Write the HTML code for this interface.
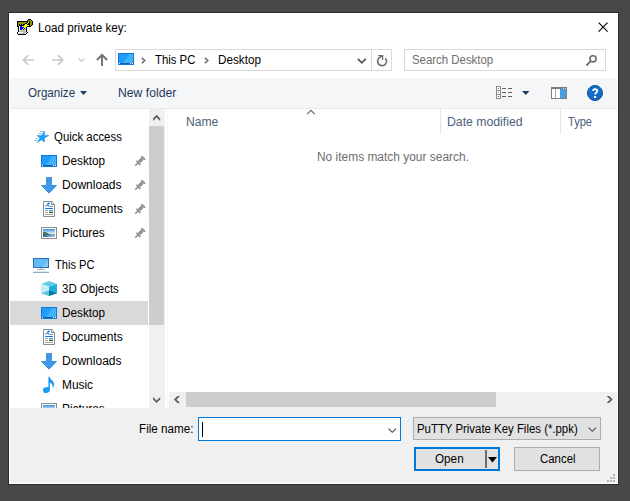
<!DOCTYPE html>
<html><head><meta charset="utf-8">
<style>
html,body{margin:0;padding:0;width:630px;height:501px;overflow:hidden;background:#484848;}
*{box-sizing:border-box;}
.a{position:absolute;}
.t{position:absolute;font-family:"Liberation Sans",sans-serif;font-size:12px;line-height:14px;white-space:nowrap;color:#000;transform-origin:0 0;}
svg{position:absolute;overflow:visible;}
</style></head><body>
<!-- dialog frame -->
<div class="a" style="left:8px;top:12px;width:611px;height:473px;background:#2b2b2b;"></div>
<div class="a" style="left:9px;top:13px;width:609px;height:471px;background:#fff;"></div>

<!-- title -->
<svg style="left:16px;top:18px" width="17" height="17" viewBox="0 0 17 17" shape-rendering="crispEdges"><rect x="12" y="1" width="3" height="1" fill="#000"/><rect x="11" y="2" width="1" height="1" fill="#000"/><rect x="12" y="2" width="3" height="1" fill="#949400"/><rect x="15" y="2" width="1" height="1" fill="#000"/><rect x="1" y="3" width="11" height="1" fill="#000"/><rect x="12" y="3" width="1" height="1" fill="#949400"/><rect x="13" y="3" width="1" height="1" fill="#000"/><rect x="14" y="3" width="2" height="1" fill="#949400"/><rect x="16" y="3" width="1" height="1" fill="#000"/><rect x="1" y="4" width="1" height="1" fill="#000"/><rect x="2" y="4" width="9" height="1" fill="#949400"/><rect x="11" y="4" width="1" height="1" fill="#000"/><rect x="12" y="4" width="1" height="1" fill="#ffff00"/><rect x="13" y="4" width="1" height="1" fill="#000"/><rect x="14" y="4" width="2" height="1" fill="#949400"/><rect x="16" y="4" width="1" height="1" fill="#000"/><rect x="1" y="5" width="1" height="1" fill="#000"/><rect x="2" y="5" width="7" height="1" fill="#949400"/><rect x="9" y="5" width="2" height="1" fill="#000"/><rect x="11" y="5" width="1" height="1" fill="#ffff00"/><rect x="12" y="5" width="2" height="1" fill="#000"/><rect x="14" y="5" width="2" height="1" fill="#949400"/><rect x="16" y="5" width="1" height="1" fill="#000"/><rect x="1" y="6" width="1" height="1" fill="#000"/><rect x="2" y="6" width="1" height="1" fill="#949400"/><rect x="3" y="6" width="1" height="1" fill="#000"/><rect x="4" y="6" width="1" height="1" fill="#949400"/><rect x="5" y="6" width="1" height="1" fill="#000"/><rect x="6" y="6" width="1" height="1" fill="#949400"/><rect x="7" y="6" width="2" height="1" fill="#000"/><rect x="9" y="6" width="2" height="1" fill="#ffff00"/><rect x="11" y="6" width="3" height="1" fill="#000"/><rect x="14" y="6" width="2" height="1" fill="#949400"/><rect x="16" y="6" width="1" height="1" fill="#000"/><rect x="1" y="7" width="1" height="1" fill="#000"/><rect x="2" y="7" width="1" height="1" fill="#949400"/><rect x="3" y="7" width="5" height="1" fill="#000"/><rect x="8" y="7" width="5" height="1" fill="#ffff00"/><rect x="13" y="7" width="1" height="1" fill="#000"/><rect x="14" y="7" width="1" height="1" fill="#949400"/><rect x="15" y="7" width="1" height="1" fill="#000"/><rect x="1" y="8" width="2" height="1" fill="#000"/><rect x="3" y="8" width="1" height="1" fill="#fff"/><rect x="4" y="8" width="2" height="1" fill="#0000ff"/><rect x="6" y="8" width="5" height="1" fill="#ffff00"/><rect x="11" y="8" width="4" height="1" fill="#000"/><rect x="2" y="9" width="1" height="1" fill="#000"/><rect x="3" y="9" width="1" height="1" fill="#fff"/><rect x="4" y="9" width="4" height="1" fill="#0000ff"/><rect x="8" y="9" width="2" height="1" fill="#ffff00"/><rect x="10" y="9" width="1" height="1" fill="#000"/><rect x="2" y="10" width="1" height="1" fill="#000"/><rect x="3" y="10" width="1" height="1" fill="#fff"/><rect x="4" y="10" width="3" height="1" fill="#0000ff"/><rect x="7" y="10" width="1" height="1" fill="#ffff00"/><rect x="8" y="10" width="1" height="1" fill="#0000ff"/><rect x="9" y="10" width="1" height="1" fill="#c0c0c0"/><rect x="10" y="10" width="1" height="1" fill="#000"/><rect x="2" y="11" width="1" height="1" fill="#000"/><rect x="3" y="11" width="1" height="1" fill="#fff"/><rect x="4" y="11" width="2" height="1" fill="#0000ff"/><rect x="6" y="11" width="1" height="1" fill="#ffff00"/><rect x="7" y="11" width="1" height="1" fill="#0000ff"/><rect x="8" y="11" width="2" height="1" fill="#c0c0c0"/><rect x="10" y="11" width="1" height="1" fill="#000"/><rect x="2" y="12" width="1" height="1" fill="#000"/><rect x="3" y="12" width="1" height="1" fill="#fff"/><rect x="4" y="12" width="6" height="1" fill="#c0c0c0"/><rect x="10" y="12" width="1" height="1" fill="#000"/><rect x="2" y="13" width="1" height="1" fill="#000"/><rect x="3" y="13" width="7" height="1" fill="#c0c0c0"/><rect x="10" y="13" width="1" height="1" fill="#000"/><rect x="1" y="14" width="1" height="1" fill="#000"/><rect x="2" y="14" width="5" height="1" fill="#fff"/><rect x="7" y="14" width="4" height="1" fill="#c0c0c0"/><rect x="11" y="14" width="1" height="1" fill="#000"/><rect x="1" y="15" width="1" height="1" fill="#000"/><rect x="2" y="15" width="1" height="1" fill="#fff"/><rect x="3" y="15" width="7" height="1" fill="#c0c0c0"/><rect x="10" y="15" width="1" height="1" fill="#000"/><rect x="2" y="16" width="8" height="1" fill="#000"/></svg>
<div class="t" style="left:37.53px;top:21px;transform:scaleX(0.972);">Load private key:</div>
<svg style="left:598px;top:22px" width="11" height="11" viewBox="0 0 11 11">
  <path d="M0.6 0.6 L9.6 9.6 M9.6 0.6 L0.6 9.6" stroke="#000" stroke-width="1.1" fill="none"/>
</svg>

<!-- nav arrows -->
<svg style="left:21px;top:54px" width="14" height="12" viewBox="0 0 14 12">
  <path d="M2.4 6 H13 M7.3 1.1 L2.4 6 L7.3 10.9" stroke="#c8c8c8" stroke-width="1.6" fill="none"/>
</svg>
<svg style="left:51px;top:54px" width="14" height="12" viewBox="0 0 14 12">
  <path d="M1 6 H11.8 M6.9 1.1 L11.8 6 L6.9 10.9" stroke="#c8c8c8" stroke-width="1.6" fill="none"/>
</svg>
<svg style="left:78px;top:57.5px" width="7" height="5" viewBox="0 0 7 5">
  <path d="M0.5 0.5 L3.5 3.5 L6.5 0.5" stroke="#c8c8c8" stroke-width="1.2" fill="none"/>
</svg>
<svg style="left:96px;top:53px" width="13" height="13" viewBox="0 0 13 13">
  <path d="M6 2 V13 M0.9 7 L6 1.9 L11.1 7" stroke="#707070" stroke-width="1.9" fill="none"/>
</svg>

<!-- address bar -->
<div class="a" style="left:115px;top:49px;width:277px;height:22px;border:1px solid #d9d9d9;"></div>
<div class="a" style="left:371px;top:50px;width:1px;height:20px;background:#d9d9d9;"></div>
<svg style="left:118px;top:53px" width="16" height="12" viewBox="0 0 16 12"><use href="#desk"/></svg>
<svg style="left:141px;top:57px" width="5" height="7" viewBox="0 0 5 7">
  <path d="M0.8 0.8 L3.8 3.5 L0.8 6.2" stroke="#707070" stroke-width="1.6" fill="none"/>
</svg>
<div class="t" style="left:155.00px;top:53px;transform:scaleX(0.945);">This PC</div>
<svg style="left:204px;top:57px" width="5" height="7" viewBox="0 0 5 7">
  <path d="M0.8 0.8 L3.8 3.5 L0.8 6.2" stroke="#707070" stroke-width="1.6" fill="none"/>
</svg>
<div class="t" style="left:217.63px;top:53px;transform:scaleX(0.974);">Desktop</div>
<svg style="left:357px;top:58px" width="10" height="6" viewBox="0 0 10 6">
  <path d="M0.8 0.8 L4.8 4.8 L8.8 0.8" stroke="#555" stroke-width="1.8" fill="none"/>
</svg>
<svg style="left:372px;top:50px" width="20" height="20" viewBox="0 0 20 20">
  <path d="M13.3 8.3 A4.4 4.4 0 1 1 7.2 7.9 L10.1 5.9" stroke="#6d6d6d" stroke-width="1.6" fill="none"/>
  <path d="M6.2 5.6 H10.6 V10" stroke="#6d6d6d" stroke-width="1.3" fill="none"/>
</svg>

<!-- search -->
<div class="a" style="left:404px;top:49px;width:202px;height:22px;border:1px solid #d9d9d9;"></div>
<div class="t" style="left:412.35px;top:53px;color:#6d6d6d;transform:scaleX(0.951);">Search Desktop</div>
<svg style="left:585px;top:54px" width="13" height="13" viewBox="0 0 13 13">
  <circle cx="8" cy="4.8" r="3.1" stroke="#6d6d6d" stroke-width="1.6" fill="none"/>
  <path d="M5.8 7.1 L1.4 11.5" stroke="#6d6d6d" stroke-width="1.8"/>
</svg>

<!-- toolbar -->
<div class="a" style="left:10px;top:78px;width:607px;height:30px;background:#f5f6f7;"></div>
<div class="a" style="left:10px;top:108px;width:607px;height:1px;background:#e8eaec;"></div>
<div class="t" style="left:27.60px;top:86px;color:#1e395b;transform:scaleX(0.967);">Organize</div>
<svg style="left:80px;top:91px" width="8" height="4" viewBox="0 0 8 4"><path d="M0 0 H7 L3.5 4 Z" fill="#1e395b"/></svg>
<div class="t" style="left:117.68px;top:86px;color:#1e395b;transform:scaleX(1.016);">New folder</div>
<svg style="left:496px;top:86px" width="17" height="13" viewBox="0 0 17 13" shape-rendering="crispEdges">
  <rect x="0" y="0" width="5" height="13" fill="#8a8a8a"/>
  <rect x="1" y="1" width="3" height="3" fill="#fff"/>
  <rect x="1" y="5" width="3" height="3" fill="#fff"/>
  <rect x="1" y="9" width="3" height="3" fill="#fff"/>
  <rect x="2" y="2" width="1" height="1" fill="#3c7a3c"/>
  <rect x="2" y="6" width="1" height="1" fill="#5a9ae8"/>
  <rect x="2" y="10" width="1" height="1" fill="#d82020"/>
  <rect x="6" y="2" width="4" height="1" fill="#606060"/>
  <rect x="12" y="2" width="4" height="1" fill="#606060"/>
  <rect x="6" y="6" width="4" height="1" fill="#606060"/>
  <rect x="12" y="6" width="4" height="1" fill="#606060"/>
  <rect x="6" y="10" width="4" height="1" fill="#606060"/>
  <rect x="12" y="10" width="4" height="1" fill="#606060"/>
</svg>
<svg style="left:522px;top:91px" width="8" height="4" viewBox="0 0 8 4"><path d="M0 0 H7.5 L3.75 4 Z" fill="#1e395b"/></svg>
<svg style="left:551px;top:87px" width="16" height="12" viewBox="0 0 16 12" shape-rendering="crispEdges">
  <rect x="0" y="0" width="16" height="12" fill="#7d7d7d"/>
  <rect x="1" y="2" width="14" height="9" fill="#fff"/>
  <rect x="12" y="1" width="1" height="1" fill="#d8d8d8"/>
  <rect x="14" y="1" width="1" height="1" fill="#d8d8d8"/>
  <rect x="4" y="2" width="1" height="9" fill="#a8a8a8"/>
  <rect x="9" y="2" width="6" height="9" fill="#4a9be6"/>
</svg>
<svg style="left:587px;top:85px" width="16" height="16" viewBox="0 0 16 16">
  <circle cx="8" cy="8" r="7.5" fill="#0f6ccb" stroke="#0a4e98" stroke-width="1"/>
  <path d="M6.1 5.9 C6.1 3.5 10.3 3.5 10.3 5.9 C10.3 7.5 8.1 7.6 8.1 9.6" stroke="#fff" stroke-width="1.8" fill="none"/>
  <rect x="7.0" y="11" width="2.1" height="2" fill="#fff"/>
</svg>

<!-- nav pane -->
<div class="a" style="left:10px;top:301px;width:138px;height:24px;background:#d9d9d9;"></div>
<div class="a" style="left:149px;top:109px;width:16px;height:299px;background:#f0f0f0;"></div>
<div class="a" style="left:149px;top:126px;width:15px;height:199px;background:#cdcdcd;"></div>


<div class="a" style="left:167px;top:109px;width:1px;height:299px;background:#f7f7f7;"></div>

<!-- quick access star -->
<svg style="left:32px;top:128px" width="20" height="18" viewBox="0 0 20 18">
  <path d="M12.4 3 L12.4 7.4 L16.9 7.4 L12.4 10.1 L12.3 14.2 L9.6 11.7 L5.4 14.5 L7.9 10.1 L5 7.4 L9.6 7.4 Z" fill="#22a0f6" stroke="#1787e0" stroke-width="0.5" stroke-linejoin="round"/>
  <path d="M8 3.5 H11.8 M6.6 5.5 H9.3 M3.6 10.5 H5.9 M2.5 12.5 H5" stroke="#7cc0f4" stroke-width="1"/>
</svg>
<div class="t" style="left:54.40px;top:130px;transform:scaleX(0.951);">Quick access</div>

<!-- desktop icon -->
<svg style="left:41px;top:155px" width="16" height="12" viewBox="0 0 16 12"><use href="#desk"/></svg>
<div class="t" style="left:61.52px;top:154px;transform:scaleX(0.979);">Desktop</div>

<!-- pins -->
<svg style="left:128px;top:150px" width="20" height="20" viewBox="0 0 20 20"><use href="#pin"/></svg>
<svg style="left:128px;top:174px" width="20" height="20" viewBox="0 0 20 20"><use href="#pin"/></svg>
<svg style="left:128px;top:198px" width="20" height="20" viewBox="0 0 20 20"><use href="#pin"/></svg>
<svg style="left:128px;top:222px" width="20" height="20" viewBox="0 0 20 20"><use href="#pin"/></svg>

<!-- downloads -->
<svg style="left:41px;top:177px" width="16" height="17" viewBox="0 0 16 17"><use href="#dl"/></svg>
<div class="t" style="left:61.50px;top:178px;transform:scaleX(1.003);">Downloads</div>
<svg style="left:43px;top:201px" width="12" height="16" viewBox="0 0 12 16"><use href="#doc"/></svg>
<div class="t" style="left:61.50px;top:202px;transform:scaleX(1.002);">Documents</div>
<svg style="left:41px;top:227px" width="16" height="12" viewBox="0 0 16 12"><use href="#pic"/></svg>
<div class="t" style="left:61.51px;top:226px;transform:scaleX(0.986);">Pictures</div>

<!-- this pc -->
<svg style="left:33px;top:258px" width="16" height="15" viewBox="0 0 16 15" shape-rendering="crispEdges">
  <rect x="0" y="0" width="16" height="10" fill="#2f6fae"/>
  <rect x="1" y="1" width="14" height="8" fill="#62bcf9"/>
  <path d="M9 9 L15 2.5 L15 9 Z" fill="#82cdfd" shape-rendering="auto"/>
  <rect x="7" y="10" width="2" height="1" fill="#b8c8d8"/>
  <rect x="4" y="11" width="8" height="1" fill="#9fb4c8"/>
  <rect x="0" y="14" width="16" height="1" fill="#97aabd"/>
  <rect x="0" y="13" width="16" height="1" fill="#dde6ee"/>
</svg>
<div class="t" style="left:54.70px;top:258px;transform:scaleX(0.926);">This PC</div>
<svg style="left:41px;top:281px" width="16" height="16" viewBox="0 0 16 16">
  <path d="M8 0 L16 2.9 L8 5.6 L0 2.9 Z" fill="#5ccde2"/>
  <path d="M0 2.9 L8 5.6 L8 15 L0 12.2 Z" fill="#c4eef5"/>
  <path d="M16 2.9 L8 5.6 L8 15 L16 12.2 Z" fill="#1eaed6"/>
  <path d="M0 12.2 L8 9.6 L8 15 Z" fill="#5cc6da"/>
  <path d="M16 12.2 L8 9.6 L8 15 Z" fill="#0b7a9a"/>
</svg>
<div class="t" style="left:62.00px;top:282px;transform:scaleX(0.958);">3D Objects</div>
<svg style="left:41px;top:307px" width="16" height="12" viewBox="0 0 16 12"><use href="#desk"/></svg>
<div class="t" style="left:61.52px;top:306px;transform:scaleX(0.979);">Desktop</div>
<svg style="left:43px;top:329px" width="12" height="16" viewBox="0 0 12 16"><use href="#doc"/></svg>
<div class="t" style="left:61.50px;top:330px;transform:scaleX(1.002);">Documents</div>
<svg style="left:41px;top:353px" width="16" height="17" viewBox="0 0 16 17"><use href="#dl"/></svg>
<div class="t" style="left:61.50px;top:354px;transform:scaleX(1.003);">Downloads</div>
<svg style="left:42px;top:376px" width="14" height="18" viewBox="0 0 14 18">
  <ellipse cx="4.4" cy="14.1" rx="3.5" ry="2.9" fill="#1c9af4" transform="rotate(-20 4.4 14.1)"/>
  <path d="M6.4 14 V0.8 L7.6 0.8 C8.2 3.5 12.3 5 12.1 8.8 C12 10.3 11.4 11.4 10.8 12 C10.9 9 9.6 7.2 7.9 6.4 V14 Z" fill="#1c9af4"/>
</svg>
<div class="t" style="left:62.3px;top:378px;transform:scaleX(0.99);">Music</div>
<div class="a" style="left:10px;top:403px;width:139px;height:5px;overflow:hidden;">
  <svg style="left:31px;top:0px" width="16" height="12" viewBox="0 0 16 12"><use href="#pic"/></svg>
  <div class="t" style="left:51.51px;top:-1px;transform:scaleX(0.986);">Pictures</div>
</div>

<!-- content header -->
<div class="t" style="left:185.69px;top:115px;color:#4c607a;transform:scaleX(1.010);">Name</div>
<svg style="left:306px;top:108.6px" width="10" height="6" viewBox="0 0 10 6"><path d="M1.2 5.1 L5 1.3 L8.8 5.1" stroke="#666" stroke-width="1.1" fill="none"/></svg>
<div class="a" style="left:440px;top:109px;width:1px;height:25px;background:#e5e5e5;"></div>
<div class="t" style="left:446.68px;top:115px;color:#4c607a;transform:scaleX(1.021);">Date modified</div>
<div class="a" style="left:560px;top:109px;width:1px;height:25px;background:#e5e5e5;"></div>
<div class="t" style="left:568.00px;top:115px;color:#4c607a;transform:scaleX(0.923);">Type</div>
<div class="t" style="left:317.00px;top:150px;color:#6d6d6d;transform:scaleX(0.995);">No items match your search.</div>

<!-- h scrollbar -->
<div class="a" style="left:169px;top:392px;width:448px;height:16px;background:#f0f0f0;"></div>
<div class="a" style="left:186px;top:392px;width:310px;height:15px;background:#cdcdcd;"></div>



<svg style="left:0;top:0" width="630" height="501" viewBox="0 0 630 501">
  <polygon points="153,118.4 156.6,114.8 160.2,118.4 160.2,121 156.6,117.4 153,121" fill="#606060"/>
  <polygon points="153,396.9 156.6,400.5 160.2,396.9 160.2,399.5 156.6,403.1 153,399.5" fill="#606060"/>
  <polygon points="177.4,396 180,396 176.5,399.5 180,403 177.4,403 173.9,399.5" fill="#606060"/>
  <polygon points="606.6,396 609.2,396 612.7,399.5 609.2,403 606.6,403 610.1,399.5" fill="#606060"/>
</svg>
<!-- bottom panel -->
<div class="a" style="left:10px;top:408px;width:607px;height:75px;background:#f0f0f0;"></div>
<div class="t" style="left:139.3px;top:422px;transform:scaleX(0.974);">File name:</div>
<div class="a" style="left:198px;top:417px;width:203px;height:24px;background:#fff;border:1px solid #0078d7;"></div>
<div class="a" style="left:202px;top:422px;width:1px;height:15px;background:#000;"></div>
<svg style="left:388px;top:427.5px" width="9" height="6" viewBox="0 0 9 6"><path d="M0.6 0.6 L4.3 4.3 L8 0.6" stroke="#444" stroke-width="1.1" fill="none"/></svg>
<div class="a" style="left:413px;top:417px;width:188px;height:23px;background:#e1e1e1;border:1px solid #adadad;"></div>
<div class="t" style="left:416.55px;top:422px;transform:scaleX(0.950);">PuTTY Private Key Files (*.ppk)</div>
<svg style="left:588px;top:426.5px" width="9" height="6" viewBox="0 0 9 6"><path d="M0.6 0.6 L4.3 4.3 L8 0.6" stroke="#444" stroke-width="1.1" fill="none"/></svg>
<div class="a" style="left:414px;top:447px;width:86px;height:24px;background:#e1e1e1;border:2px solid #0078d7;"></div>
<div class="t" style="left:435.40px;top:452px;transform:scaleX(0.976);">Open</div>
<div class="a" style="left:485px;top:450px;width:2px;height:18px;background:#6d6d6d;"></div>
<svg style="left:488px;top:457px" width="10" height="6" viewBox="0 0 10 6"><path d="M0 0 H9 L4.5 5.5 Z" fill="#000"/></svg>
<div class="a" style="left:514px;top:447px;width:86px;height:24px;background:#e1e1e1;border:1px solid #adadad;"></div>
<div class="t" style="left:539.60px;top:452px;transform:scaleX(0.951);">Cancel</div>
<!-- grip -->
<div class="a" style="left:613px;top:474px;width:2px;height:2px;background:#b4b4b4;"></div>
<div class="a" style="left:610px;top:477px;width:2px;height:2px;background:#b4b4b4;"></div>
<div class="a" style="left:613px;top:477px;width:2px;height:2px;background:#b4b4b4;"></div>
<div class="a" style="left:607px;top:480px;width:2px;height:2px;background:#b4b4b4;"></div>
<div class="a" style="left:610px;top:480px;width:2px;height:2px;background:#b4b4b4;"></div>
<div class="a" style="left:613px;top:480px;width:2px;height:2px;background:#b4b4b4;"></div>

<!-- defs -->
<svg width="0" height="0" style="position:absolute">
 <defs>
  <g id="pin" stroke="#8b949c" fill="none">
   <path d="M13.4 6.2 L17 9.8" stroke-width="2"/>
   <path d="M14.3 8.7 L10.9 12.1" stroke-width="3.4"/>
   <path d="M8.3 10.9 L12.3 14.9" stroke-width="1.8"/>
   <path d="M10 13 L7.2 15.8" stroke-width="1.5"/>
  </g>
  <g id="dl">
   <path d="M5.5 0.5 H10.5 V8.5 H15.5 L8 16.2 L0.5 8.5 H5.5 Z" fill="#3e98e8" stroke="#2b80d2" stroke-width="0.8"/>
  </g>
  <g id="doc">
   <path d="M0.5 0.5 H8.8 L11.5 3.2 V15.5 H0.5 Z" fill="#fff" stroke="#8a8a8a" stroke-width="1"/>
   <path d="M8.5 0.5 V3.5 H11.5" fill="none" stroke="#8a8a8a" stroke-width="1"/>
   <path d="M2.3 5.5 C3.3 5 4.5 3 5.6 1.6 L5.2 5.5 M3.4 4.3 H5.2" stroke="#2a8ae0" stroke-width="1" fill="none"/>
   <rect x="6" y="2" width="1" height="1" fill="#3a98e8"/>
   <rect x="6" y="5" width="4" height="1" fill="#4aa0e8"/>
   <rect x="2" y="7" width="8" height="1" fill="#1a7ad8"/>
   <rect x="2" y="9" width="3" height="1" fill="#a0a0a0"/>
   <rect x="2" y="11" width="3" height="1" fill="#a0a0a0"/>
   <rect x="6" y="9" width="4" height="1" fill="#6a9ef0"/>
   <rect x="6" y="10" width="4" height="1" fill="#a8c8a8"/>
   <rect x="6" y="11" width="4" height="1" fill="#2e5e3e"/>
   <rect x="2" y="13" width="8" height="1" fill="#a8a8a8"/>
  </g>
  <g id="pic">
   <defs>
    <linearGradient id="sky" x1="0" y1="0" x2="0" y2="1"><stop offset="0" stop-color="#3f88e6"/><stop offset="0.5" stop-color="#d4eaf8"/><stop offset="1" stop-color="#e0f0fa"/></linearGradient>
    <linearGradient id="wat" x1="0" y1="0" x2="1" y2="0"><stop offset="0" stop-color="#2e64a8"/><stop offset="1" stop-color="#a8c8e4"/></linearGradient>
   </defs>
   <rect x="0.5" y="0.5" width="15" height="11" fill="#fff" stroke="#8c8c8c" stroke-width="1"/>
   <rect x="2" y="2" width="12" height="8" fill="url(#sky)"/>
   <path d="M2 5 C4 4.6 6 5.4 8 7 C10 7.6 12 7.4 14 7.6 V10 H2 Z" fill="#3c7458"/>
   <path d="M2 7.8 C6 7.9 10 8.1 14 8.2 V10 H2 Z" fill="url(#wat)"/>
  </g>
  <g id="desk" shape-rendering="crispEdges">
   <rect x="0" y="0" width="16" height="12" fill="#1479d6"/>
   <rect x="1" y="1" width="14" height="9" fill="#1f9cfb"/>
   <path d="M11.5 1 L15 1 L15 10 L5 10 Z" fill="#42b2ff" shape-rendering="auto"/>
   <rect x="1" y="10" width="14" height="1" fill="#0c5eae"/>
   <rect x="1" y="10" width="1" height="1" fill="#fff"/>
   <rect x="12" y="10" width="1" height="1" fill="#fff"/>
   <rect x="14" y="10" width="1" height="1" fill="#fff"/>
  </g>
 </defs>
</svg>
</body></html>
